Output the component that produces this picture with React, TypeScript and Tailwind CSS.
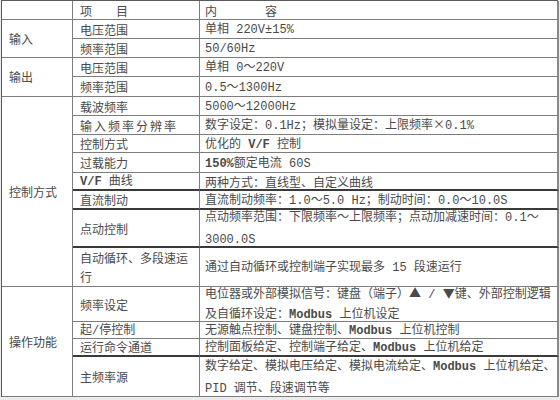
import React from "react";

const mono = "font-['Liberation_Mono',monospace] text-[12px]";

function T({ s }: { s: string }) {
  const parts = s.split(/([\x20-\x7E±]+)/);
  return (
    <>
      {parts.map((p, i) => {
        if (i % 2 === 1) {
          const bold = /Modbus|V\/F|150%/.test(p);
          return (
            <span key={i} className={bold ? `${mono} font-bold` : mono}>
              {p}
            </span>
          );
        }
        return <React.Fragment key={i}>{p}</React.Fragment>;
      })}
    </>
  );
}

const line = "border-[#7d7d7d]";

function C1({ text, span }: { text: string; span: string }) {
  return (
    <div className={`${span} flex items-center border-r border-b ${line} pl-[7px]`}>
      <T s={text} />
    </div>
  );
}

function C2({ lines, thick, lead, extra }: { lines: string[]; thick?: boolean; lead?: string; extra?: string }) {
  return (
    <div
      className={`flex flex-col justify-center border-r ${line} pl-[7px] whitespace-nowrap ${lead ?? "leading-[19px]"} ${
        thick ? "border-b-2 border-b-[#3a3a3a]" : `border-b ${line}`
      } ${extra ?? ""}`}
    >
      {lines.map((l, i) => (
        <div key={i}>
          <T s={l} />
        </div>
      ))}
    </div>
  );
}

function C3({ lines, thick, lead }: { lines: string[]; thick?: boolean; lead?: string }) {
  return (
    <div
      className={`flex flex-col justify-center border-r-2 border-r-[#8a8a8a] pl-[5px] whitespace-nowrap ${lead ?? "leading-[19px]"} ${
        thick ? "border-b-2 border-b-[#3a3a3a]" : `border-b ${line}`
      }`}
    >
      {lines.map((l, i) => (
        <div key={i}>
          <T s={l} />
        </div>
      ))}
    </div>
  );
}

export default function App() {
  return (
    <div className="w-[560px] h-[400px] bg-[#ececec] overflow-hidden">
      <div
        className="ml-px w-[557px] grid grid-cols-[71px_127px_359px] grid-rows-[19px_19px_19px_19px_20px_19px_19px_18px_20px_18px_19px_38px_39px_35px_17px_18px_40px] border-t border-l border-[#5a5a5a] bg-white text-[12px] text-[#4a4a4a] font-['Noto_Sans_CJK_SC',sans-serif]"
      >
        {/* header */}
        <div className={`border-r border-b ${line}`}></div>
        <C2 lines={["项　　目"]} />
        <C3 lines={["内　　　　容"]} />

        {/* 输入 */}
        <C1 text="输入" span="row-span-2" />
        <C2 lines={["电压范围"]} />
        <C3 lines={["单相 220V±15%"]} />
        <C2 lines={["频率范围"]} />
        <C3 lines={["50/60Hz"]} />

        {/* 输出 */}
        <C1 text="输出" span="row-span-2" />
        <C2 lines={["电压范围"]} />
        <C3 lines={["单相 0～220V"]} />
        <C2 lines={["频率范围"]} />
        <C3 lines={["0.5～1300Hz"]} />

        {/* 控制方式 */}
        <C1 text="控制方式" span="row-span-8" />
        <C2 lines={["载波频率"]} />
        <C3 lines={["5000～12000Hz"]} />
        <C2 lines={["输入频率分辨率"]} extra="tracking-[2px]" />
        <C3 lines={["数字设定：0.1Hz；模拟量设定：上限频率×0.1%"]} />
        <C2 lines={["控制方式"]} />
        <C3 lines={["优化的 V/F 控制"]} />
        <C2 lines={["过载能力"]} />
        <C3 lines={["150%额定电流 60S"]} />
        <C2 lines={["V/F 曲线"]} thick />
        <C3 lines={["两种方式：直线型、自定义曲线"]} thick />
        <C2 lines={["直流制动"]} thick />
        <C3 lines={["直流制动频率：1.0～5.0 Hz；制动时间：0.0～10.0S"]} thick />
        <C2 lines={["点动控制"]} thick />
        <C3 lines={["点动频率范围：下限频率～上限频率；点动加减速时间：0.1～", "3000.0S"]} thick />
        <C2 lines={["自动循环、多段速运", "行"]} />
        <C3 lines={["通过自动循环或控制端子实现最多 15 段速运行"]} />

        {/* 操作功能 */}
        <C1 text="操作功能" span="row-span-4" />
        <C2 lines={["频率设定"]} />
        <C3
          lines={["电位器或外部模拟信号：键盘（端子）▲ / ▼键、外部控制逻辑", "及自循环设定：Modbus 上位机设定"]}
          lead="leading-[17px]"
        />
        <C2 lines={["起/停控制"]} lead="leading-[16px]" />
        <C3 lines={["无源触点控制、键盘控制、Modbus 上位机控制"]} lead="leading-[16px]" />
        <C2 lines={["运行命令通道"]} thick lead="leading-[16px]" />
        <C3 lines={["控制面板给定、控制端子给定、Modbus 上位机给定"]} thick lead="leading-[16px]" />
        <C2 lines={["主频率源"]} />
        <C3
          lines={["数字给定、模拟电压给定、模拟电流给定、Modbus 上位机给定、", "PID 调节、段速调节等"]}
          lead="leading-[20px]"
        />
      </div>
    </div>
  );
}
